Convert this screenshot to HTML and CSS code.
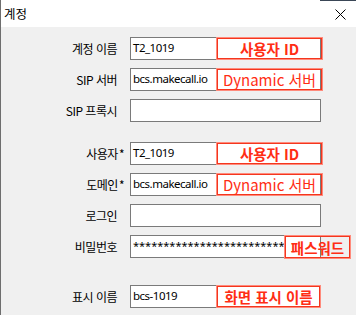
FILE: index.html
```html
<!DOCTYPE html>
<html lang="ko">
<head>
  <meta charset="UTF-8">
  <meta name="viewport" content="width=device-width, initial-scale=1.0">
  <link rel="stylesheet" href="styles.css">
</head>
<body>

<div class="window">
  <span class="behind"></span>
  <div class="titlebar">
    <span class="title">계정</span>
    <svg class="close" width="11" height="11" viewBox="0 0 11 11">
      <path d="M0.5 0.5 L10.5 10.5 M10.5 0.5 L0.5 10.5" stroke="#000" stroke-width="1" fill="none"/>
    </svg>
  </div>

  <div class="form">
    <div class="row">
      <div class="label">계정 이름</div>
      <div class="field"><div class="input">T2_1019</div><span class="note bold">사용자 ID</span></div>
    </div>
    <div class="row">
      <div class="label">SIP 서버</div>
      <div class="field"><div class="input">bcs.makecall.io</div><span class="note">Dynamic 서버</span></div>
    </div>
    <div class="row">
      <div class="label">SIP 프록시</div>
      <div class="field"><div class="input"></div></div>
    </div>

    <div class="row section">
      <div class="label">사용자<span class="req">*</span></div>
      <div class="field"><div class="input">T2_1019</div><span class="note bold">사용자 ID</span></div>
    </div>
    <div class="row">
      <div class="label">도메인<span class="req">*</span></div>
      <div class="field"><div class="input">bcs.makecall.io</div><span class="note">Dynamic 서버</span></div>
    </div>
    <div class="row">
      <div class="label">로그인</div>
      <div class="field"><div class="input"></div></div>
    </div>
    <div class="row">
      <div class="label">비밀번호</div>
      <div class="field"><div class="input secret">*************************</div><span class="note bold pw">패스워드</span></div>
    </div>

    <div class="row section-wide">
      <div class="label">표시 이름</div>
      <div class="field"><div class="input">bcs-1019</div><span class="note bold name">화면 표시 이름</span></div>
    </div>
  </div>
</div>

</body>
</html>
```

FILE: styles.css
```css
body {
  margin: 0;
  background: #f0f0f0;
  font-family: "Noto Sans CJK KR", "Noto Sans", sans-serif;
}

.window {
  position: relative;
  width: 355px;
  height: 315px;
  border-left: 1px solid #6e6e6e;
  background: #f0f0f0;
  overflow: hidden;
}

/* bit of the window behind, top right */
.behind {
  position: absolute;
  top: 0;
  right: 0;
  width: 36px;
  height: 1px;
  background: #3a4656;
}

.titlebar {
  height: 27px;
  background: #fff;
  display: flex;
  align-items: center;
  justify-content: space-between;
  padding: 0 10px 0 3px;
}

.title {
  font-size: 12.5px;
  color: #000;
}

.close {
  display: block;
  margin-top: 1px;
}

.form {
  padding-top: 10px;
  display: flex;
  flex-direction: column;
  gap: 8px;
}

.row {
  display: flex;
  align-items: center;
  height: 23px;
}

.row.section {
  margin-top: 12px;
}

.row.section-wide {
  margin-top: 19px;
}

.label {
  width: 116px;
  margin-right: 13px;
  text-align: right;
  font-size: 12px;
  letter-spacing: -0.5px;
  color: #000;
}

.req {
  margin-right: -7px;
  margin-left: 1px;
}

.field {
  position: relative;
  width: 191px;
  height: 23px;
}

.input {
  box-sizing: border-box;
  height: 23px;
  border: 1px solid #7a7a7a;
  background: #fff;
  padding-left: 2px;
  font-family: "Noto Sans", sans-serif;
  font-size: 11.5px;
  letter-spacing: -0.5px;
  line-height: 20px;
  color: #000;
  white-space: nowrap;
  overflow: hidden;
}

.input.secret {
  font-size: 11px;
  letter-spacing: 0;
}

.note {
  position: absolute;
  top: 0;
  left: 86px;
  width: 107px;
  height: 23px;
  box-sizing: border-box;
  border: 1px solid #ff8b7c;
  box-shadow: inset 0 0 0 1px #f4361e;
  display: flex;
  align-items: center;
  justify-content: center;
  font-size: 15px;
  color: #ff2d14;
  white-space: nowrap;
}

.note.bold {
  font-size: 14.5px;
  font-weight: bold;
}

.note.pw {
  left: 154px;
  width: 67px;
  height: 24px;
}

.note.name {
  width: 105px;
}
```
